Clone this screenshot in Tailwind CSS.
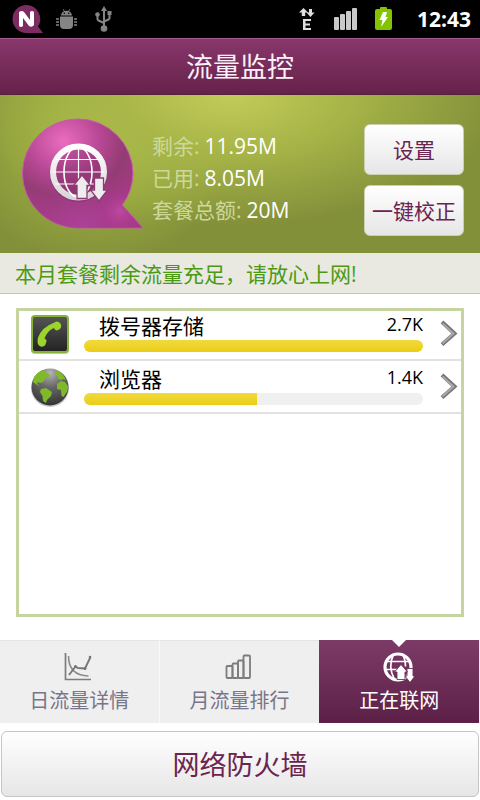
<!DOCTYPE html>
<html lang="zh-CN">
<head>
<meta charset="utf-8">
<meta name="viewport" content="width=device-width, initial-scale=1">
<title>流量监控</title>
<script src="https://cdn.jsdelivr.net/npm/@tailwindcss/browser@4"></script>
</head>
<body class="flex min-h-screen flex-col bg-white font-['Open_Sans','Noto_Sans_CJK_SC',sans-serif] text-black">

<!-- Status bar -->
<div class="flex h-[38px] items-center justify-between bg-black pr-[9px] pl-3">
  <div class="flex items-center gap-3">
    <svg class="h-8 w-8" viewBox="0 0 32 32" aria-hidden="true">
      <path d="M14.500 2a14 14 0 1 0 0 28H31l-5-6.500A14 14 0 0 0 14.500 2z" fill="#7d2c62"/>
      <path d="M7 9q3-2 5 0l6 8V9q2-2 4 0v13q-2 3-5 1l-6-8v8q-2 2-4 0z" fill="#fff"/>
    </svg>
    <svg class="h-[21px] w-[21px]" viewBox="0 0 21 21" aria-hidden="true">
      <g fill="#858585"><path d="M5 6.500C5.200 4 7 2.500 8 2.200L6.800.4l.6-.4 1.300 1.900q1.800-.5 3.600 0L13.600 0l.6.400L13 2.200c1.800.9 2.800 2.300 3 4.300zM4 7.500h13V16q0 4-4 4H8q-4 0-4-4z"/></g>
      <g fill="#000"><circle cx="8.300" cy="4.300" r=".8"/><circle cx="12.700" cy="4.300" r=".8"/></g>
      <path d="M3 10H0M3 13H0M3 16H0M18 10h3M18 13h3M18 16h3" fill="none" stroke="#858585" stroke-width="1.600"/>
    </svg>
    <svg class="ml-[6px] h-[26px] w-[18px]" viewBox="0 0 18 26" aria-hidden="true">
      <path d="M9 3v20M2.500 9v4q0 1 1 1.500L9 17M14.500 8v4q0 1-1 1.500L9 15.500" fill="none" stroke="#858585" stroke-width="2"/>
      <g fill="#858585"><path d="M9 0l3 5H6zM12.500 5h4v4h-4z"/><circle cx="2.500" cy="8.500" r="2.300"/><circle cx="9" cy="22.500" r="3.300"/></g>
    </svg>
  </div>
  <div class="flex items-center">
    <svg class="h-[22px] w-[16px]" viewBox="0 0 16 22" aria-hidden="true">
      <g fill="#dedede"><path d="M4.500 0L9 4.500H6.200V8H2.800V4.500H0zM11.500 9L7.500 4.500H10V1h3v3.500h2.500z"/><path d="M4 11h8v2H6.500v2.500H11v2H6.500V20H12v2H4z"/></g>
    </svg>
    <svg class="ml-[19px] h-[23px] w-[24px]" viewBox="0 0 24 23" aria-hidden="true">
      <g fill="#c9c9c9"><rect y="9" width="5" height="13" rx="1"/><rect x="6" y="6" width="5" height="16" rx="1"/><rect x="12" y="3" width="5" height="19" rx="1"/><rect x="18" width="5" height="22" rx="1"/></g>
    </svg>
    <svg class="ml-[17px] h-6 w-[17px]" viewBox="0 0 17 24" aria-hidden="true">
      <path d="M5 2V1q0-1 1-1h5q1 0 1 1v1h3q2 0 2 2v17q0 2-2 2H2q-2 0-2-2V4q0-2 2-2z" fill="#83c400"/>
      <path d="M8 5h4l-1.500 5H13l-7 10 1.500-7H4.500z" fill="#fff"/>
    </svg>
    <span class="ml-[25px] text-[21px] leading-[38px] font-bold text-white">12:43</span>
  </div>
</div>

<header class="flex h-[57px] items-center justify-center border-t border-b border-t-[#a3588a] border-b-[#55203a] bg-linear-to-b from-[#89376c] to-[#652249]">
  <h1 class="text-[27px] leading-8 text-[#fdf0fa]">流量监控</h1>
</header>

<!-- Plan summary -->
<section class="flex h-[158px] items-center bg-[#83903a] bg-[radial-gradient(ellipse_270px_130px_at_48%_0%,#c2cb58_0%,#a9b749_40%,transparent_100%),radial-gradient(ellipse_140px_120px_at_20%_30%,#a9be44_0%,transparent_100%)] pr-4 pl-[22px]">
  <svg class="h-[112px] w-[122px] shrink-0" viewBox="0 0 122 112" aria-hidden="true">
    <defs>
      <radialGradient id="bubble" cx=".34" cy=".2" r=".75"><stop offset="0" stop-color="#ea6cc0"/><stop offset=".4" stop-color="#b84895"/><stop offset=".68" stop-color="#933c74"/><stop offset="1" stop-color="#a83a88"/></radialGradient>
      <radialGradient id="glow" cx=".5" cy="1" r=".6"><stop offset="0" stop-color="#ae429a" stop-opacity=".9"/><stop offset="1" stop-color="#a03a84" stop-opacity="0"/></radialGradient>
      <radialGradient id="tail" gradientUnits="userSpaceOnUse" cx="98" cy="93" r="26"><stop offset="0" stop-color="#c04ba4" stop-opacity=".9"/><stop offset="1" stop-color="#a03084" stop-opacity="0"/></radialGradient>
      <linearGradient id="ring" x1="0" y1="0" x2="0" y2="1"><stop offset="0" stop-color="#fff"/><stop offset="1" stop-color="#d9d4d8"/></linearGradient>
    </defs>
    <path d="M56 1A55 54 0 1 0 56 110H121L100 87A54 54 0 0 0 111 56A55 55 0 0 0 56 1z" fill="url(#bubble)" stroke="#c75aae"/>
    <path d="M56 1A55 54 0 1 0 56 110H121L100 87A54 54 0 0 0 111 56A55 55 0 0 0 56 1z" fill="url(#glow)"/>
    <path d="M56 1A55 54 0 1 0 56 110H121L100 87A54 54 0 0 0 111 56A55 55 0 0 0 56 1z" fill="url(#tail)"/>
    <circle cx="56.500" cy="55" r="29" fill="#50153c" opacity=".2"/>
    <circle cx="56.500" cy="54" r="25.500" fill="none" stroke="url(#ring)" stroke-width="6"/>
    <g fill="none" stroke="#fff"><ellipse cx="56" cy="54" rx="14" ry="25" stroke-width="1.600"/><path d="M56.500 29v50M33 41.500h47M31 54h51M33 66h47" stroke-width="1.200"/></g>
    <path d="M60 57l8.500 10.500H65V80.500h-10V67.500h-3.500zM72.500 60h9v12h4l-8.500 11-8.500-11h4z" fill="#eeecee" stroke="#8e3b72" stroke-width="1.300"/>
  </svg>
  <dl class="ml-2 flex-1 pt-[8px] text-[21px] leading-8 text-white">
    <div class="flex gap-[5px]"><dt class="text-[#cdd99b]">剩余:</dt><dd>11.95M</dd></div>
    <div class="flex gap-[5px]"><dt class="text-[#cdd99b]">已用:</dt><dd>8.05M</dd></div>
    <div class="flex gap-[5px]"><dt class="text-[#cdd99b]">套餐总额:</dt><dd>20M</dd></div>
  </dl>
  <div class="flex w-[100px] shrink-0 flex-col gap-[10px] pt-3 text-[21px] leading-8 text-[#6b2450]">
    <button type="button" class="h-[51px] rounded-md border border-[#cbd0b0] bg-linear-to-b from-white to-[#e6e6e6] whitespace-nowrap">设置</button>
    <button type="button" class="h-[51px] rounded-md border border-[#cbd0b0] bg-linear-to-b from-white to-[#e6e6e6] whitespace-nowrap">一键校正</button>
  </div>
</section>

<p class="h-[41px] border-b border-[#c3c4ba] bg-[#e9e9e1] px-[15px] text-[21px] leading-[42px] text-[#4c9a13]">本月套餐剩余流量充足，请放心上网!</p>

<!-- Per-app traffic -->
<main class="flex flex-1 flex-col px-4 pt-[14px] pb-[23px]">
  <ul class="flex-1 border-[3px] border-[#c6d4a0]">
    <li class="flex h-[50px] items-end border-b-2 border-[#e1e1e1] pr-[3px] pl-[11px]">
      <svg class="mb-[5px] h-10 w-10 shrink-0" viewBox="0 0 40 40" aria-hidden="true">
        <defs><linearGradient id="tile" x1="0" y1="0" x2="0" y2="1"><stop offset="0" stop-color="#565656"/><stop offset="1" stop-color="#222"/></linearGradient></defs>
        <rect x="1" y="2" width="38" height="38" rx="4" fill="#777" opacity=".45"/>
        <rect x="2" y="2" width="36" height="36" rx="3" fill="url(#tile)" stroke="#86b437" stroke-width="2"/>
        <path d="M24.500 8.500q4-2.500 6.500 2 .8 2.500-1 4.500l-3 1.500q-2 0-3-2.500-6.500 2.500-9.500 10.500 2.500 1 2 3l-1.500 4q-2.500 2-5.500.5-3-2.500-1.500-8.500 4-10.500 16.500-15z" fill="#9bd52b"/>
      </svg>
      <div class="mb-[7px] ml-[14px] flex-1">
        <div class="flex justify-between pl-[15px]">
          <span class="text-[21px] leading-7">拨号器存储</span><span class="text-[18px] leading-6">2.7K</span>
        </div>
        <div class="h-3 overflow-hidden rounded-full bg-[#f0f0f0]" role="progressbar" aria-label="拨号器存储" aria-valuenow="100"><div class="h-full bg-linear-to-b from-[#f0da3c] to-[#ebcd12]" style="width:100%"></div></div>
      </div>
      <svg class="mb-3 ml-[17px] h-7 w-[18px] shrink-0" viewBox="0 0 18 28" aria-hidden="true"><path d="M2 3l12.500 11.500L2 25.500" fill="none" stroke="#757575" stroke-width="4"/><path d="M2.500 4.500l11 10-11 10" fill="none" stroke="#a8a8a8" stroke-width="2"/></svg>
    </li>
    <li class="flex h-[53px] items-end border-b-2 border-[#e1e1e1] pr-[3px] pl-[11px]">
      <svg class="mb-[5px] h-10 w-10 shrink-0" viewBox="0 0 40 40" aria-hidden="true">
        <defs><radialGradient id="earth" cx=".5" cy=".12" r=".85"><stop offset="0" stop-color="#b5b5b5"/><stop offset=".45" stop-color="#686868"/><stop offset="1" stop-color="#373737"/></radialGradient></defs>
        <circle cx="20" cy="21" r="19" fill="#888" opacity=".45"/>
        <circle cx="20" cy="20" r="18.500" fill="url(#earth)"/>
        <path d="M4 10q4-5 8-7l4 1-1 3 3-1 2 3-4 2-3 4-3 1-2-1-1 2 3 2-3-1-4-3zM11 22l5-1 6 4-1 4-4 4-1 3-3-2-.5-5-2.500-4zM25 3q5 1 8 5l3 5-3-1-2 1-3-1v-3l-3-1 1-2zM27 17l4-3 4 1 3 4-.5 5-4 6-2-1-.5-6-4-1z" fill="#7fb92a"/>
      </svg>
      <div class="mb-[7px] ml-[14px] flex-1">
        <div class="flex justify-between pl-[15px]">
          <span class="text-[21px] leading-7">浏览器</span><span class="text-[18px] leading-6">1.4K</span>
        </div>
        <div class="h-3 overflow-hidden rounded-full bg-[#f0f0f0]" role="progressbar" aria-label="浏览器" aria-valuenow="51"><div class="h-full bg-linear-to-b from-[#f0da3c] to-[#ebcd12]" style="width:51%"></div></div>
      </div>
      <svg class="mb-3 ml-[17px] h-7 w-[18px] shrink-0" viewBox="0 0 18 28" aria-hidden="true"><path d="M2 3l12.500 11.500L2 25.500" fill="none" stroke="#757575" stroke-width="4"/><path d="M2.500 4.500l11 10-11 10" fill="none" stroke="#a8a8a8" stroke-width="2"/></svg>
    </li>
  </ul>
</main>

<nav class="grid h-[83px] grid-cols-3 bg-[#efefef] pr-px text-[20px] leading-7 text-[#77758a]">
  <a href="#day" class="flex flex-col items-center border-t border-r border-t-[#e4e4e4] border-r-[#f9f9f9] pt-[11px]">
    <svg class="h-[30px] w-[30px]" viewBox="0 0 30 30" fill="none" aria-hidden="true"><path d="M1.500 1v26.500H27" stroke="#7c7c7c" stroke-width="1.700"/><path d="M4.500 4q0 19.500 20 20" stroke="#8c8c8c" stroke-width="1.600"/><path d="M5 23l6.500-8.500 2.500 1.500 7 .5L26.500 5" stroke="#777" stroke-width="1.900"/><g fill="#777"><circle cx="11.500" cy="14.500" r="1.500"/><circle cx="21" cy="16.500" r="1.500"/><circle cx="26" cy="5" r="1.300"/></g></svg>
    <span class="mt-[5px]">日流量详情</span>
  </a>
  <a href="#month" class="flex flex-col items-center border-t border-t-[#e4e4e4] pt-[11px]">
    <svg class="h-[30px] w-[30px]" viewBox="0 0 30 30" fill="none" stroke="#7c7c7c" stroke-width="1.800" aria-hidden="true"><rect x="2.500" y="14" width="6" height="12" rx="1"/><rect x="8.500" y="11.500" width="5.500" height="14.500" rx="1"/><rect x="14" y="8.500" width="5.500" height="17.500" rx="1"/><rect x="19.500" y="3.500" width="6.500" height="22.500" rx="1"/></svg>
    <span class="mt-[5px]">月流量排行</span>
  </a>
  <a href="#online" aria-current="page" class="relative flex flex-col items-center bg-linear-to-b from-[#7c3b67] to-[#5c2047] pt-3 text-white">
    <svg class="absolute top-0 h-[7px] w-[14px]" viewBox="0 0 14 7" aria-hidden="true"><path d="M0 0h14L7 7z" fill="#fff"/></svg>
    <svg class="h-[30px] w-8" viewBox="0 0 32 30" aria-hidden="true">
      <g fill="none" stroke="#fff"><circle cx="15" cy="15" r="13" stroke-width="3.200"/><path d="M10.500 2.500q-6 12 1 25M19.500 2.500q3 5 3 12M4 9.500h22M2.500 17.500h13" stroke-width="1.700"/></g>
      <path d="M18 12.500l6.500 7.500H22v7.500h-8V20h-2.500zM24 16.500h6V24h2l-5 6.500-5-6.500h2z" fill="#fff" stroke="#6f315b" stroke-width=".9"/>
    </svg>
    <span class="mt-[5px]">正在联网</span>
  </a>
</nav>

<footer class="flex px-px pt-2 pb-[3px]">
  <button type="button" class="h-[66px] flex-1 rounded-md border border-[#c5c5c5] bg-linear-to-b from-white to-[#e6e6e6] pt-px text-[27px] leading-8 text-[#6b2450]">网络防火墙</button>
</footer>
</body>
</html>
